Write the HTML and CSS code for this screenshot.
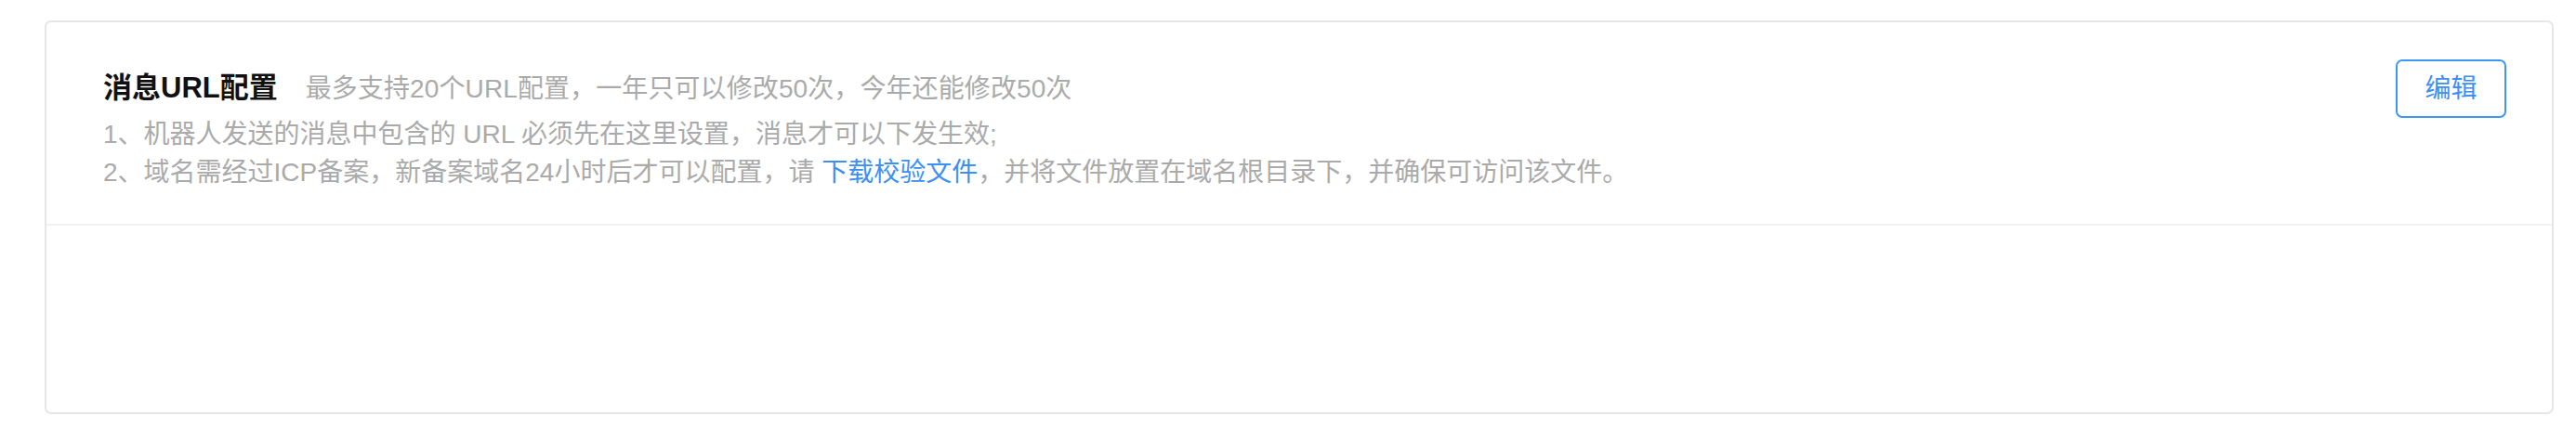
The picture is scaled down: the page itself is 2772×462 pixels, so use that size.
FILE: index.html
```html
<!DOCTYPE html>
<html lang="zh-CN">
<head>
<meta charset="utf-8">
<title>消息URL配置</title>
<link rel="stylesheet" href="styles.css">
</head>
<body>
<div class="card">
  <div class="card-head">
    <div class="head-main">
      <div class="title-row">
        <span class="title">消息URL配置</span>
        <span class="subtitle">最多支持20个URL配置，一年只可以修改50次，今年还能修改50次</span>
      </div>
      <div class="desc">
        <p class="desc-line">1、机器人发送的消息中包含的 URL 必须先在这里设置，消息才可以下发生效;</p>
        <p class="desc-line">2、域名需经过ICP备案，新备案域名24小时后才可以配置，请 <a class="link" href="#">下载校验文件</a>，并将文件放置在域名根目录下，并确保可访问该文件。</p>
      </div>
    </div>
    <button class="btn-edit" type="button">编辑</button>
  </div>
  <div class="card-body"></div>
</div>
</body>
</html>
```

FILE: styles.css
```css
html, body {
  margin: 0;
  padding: 0;
  background: #ffffff;
}

body {
  padding: 22px 24px 0 48px;
  font-family: "Liberation Sans", "Noto Sans CJK SC", sans-serif;
}

.card {
  border: 2px solid #e6e6e6;
  border-radius: 7px;
  background: #ffffff;
  height: 420px;
  display: flex;
  flex-direction: column;
}

.card-head {
  display: flex;
  align-items: flex-start;
  justify-content: space-between;
  padding: 40px 49px 35px 61px;
  border-bottom: 2px solid #f1f1f1;
}

.head-main {
  display: flex;
  flex-direction: column;
}

.title-row {
  margin-top: 10px;
  display: flex;
  align-items: baseline;
  line-height: 42px;
  height: 42px;
}

.title {
  font-size: 31px;
  font-weight: bold;
  color: #111111;
}

.subtitle {
  margin-left: 30px;
  font-size: 28px;
  letter-spacing: 0.1px;
  color: #aaaaaa;
}

.desc {
  margin-top: 8px;
}

.desc-line {
  margin: 0;
  font-size: 28px;
  line-height: 41px;
  color: #aaaaaa;
  white-space: nowrap;
}

.link {
  color: #3b8ff6;
  text-decoration: none;
}

.btn-edit {
  width: 119px;
  height: 63px;
  border: 2px solid #3f96f5;
  border-radius: 7px;
  background: #ffffff;
  color: #3b8ff6;
  font-family: "Liberation Sans", "Noto Sans CJK SC", sans-serif;
  font-size: 28px;
  padding: 0;
  line-height: 1;
  cursor: pointer;
}

.card-body {
  flex: 1;
}
```
